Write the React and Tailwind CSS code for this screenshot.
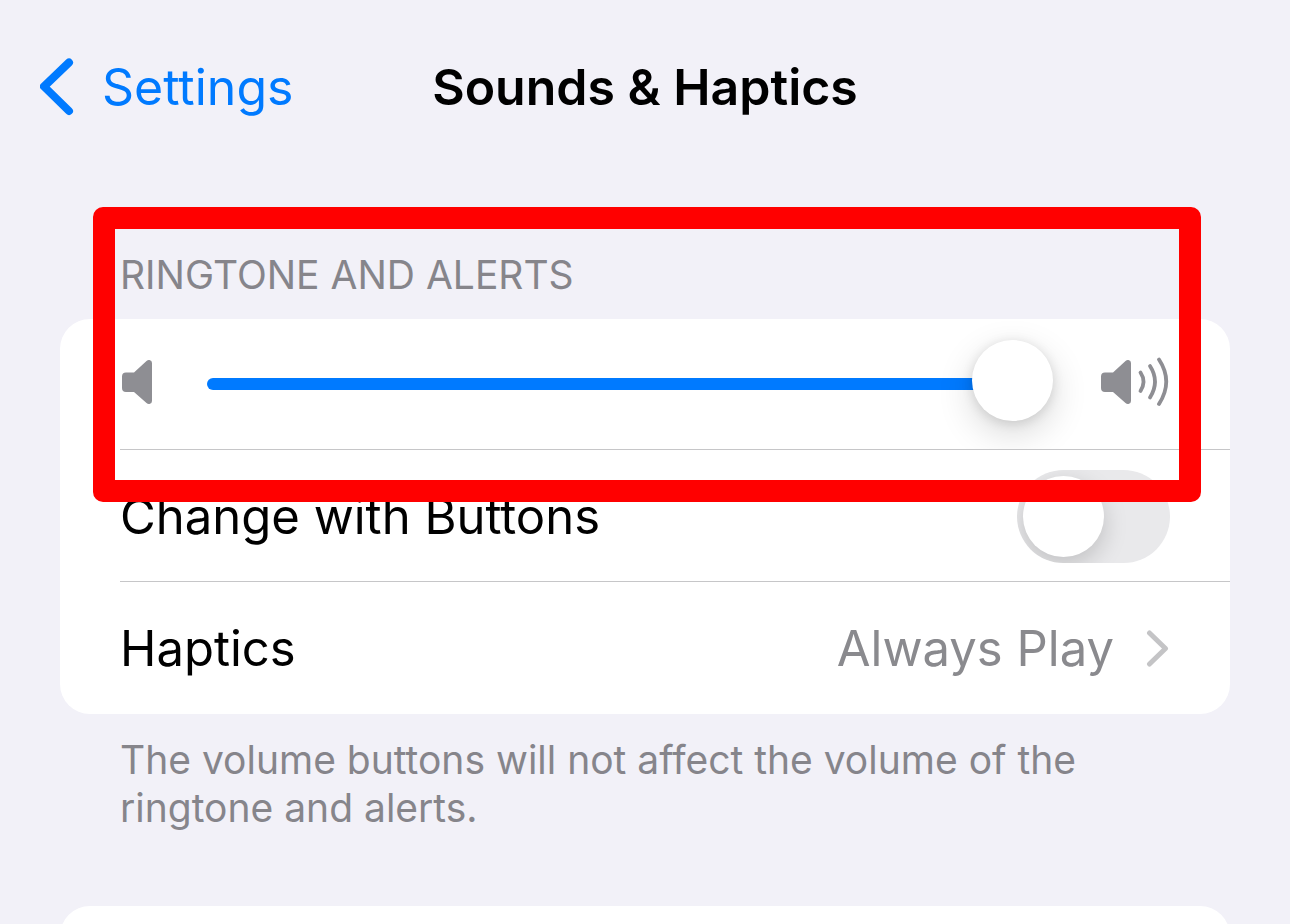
import {useState} from 'react';

const Speaker = ({waves}) => (
  <svg viewBox={waves ? '0 0 70 50' : '-1 0 32 50'} className={waves ? 'w-[70px] h-[50px] shrink-0' : 'w-8 h-[50px] shrink-0'} fill="none" aria-hidden="true">
    <path d="M5 15.500H13L25.500 4Q27 2.700 28.500 3.100Q31 3.600 31 6V44Q31 46.400 28.500 46.900Q27 47.300 25.500 46L13 35H5Q1 35 1 31V19.500Q1 15.500 5 15.500Z" fill="#8e8e93" />
    {waves && (
      <g stroke="#8e8e93" strokeWidth="3.800" strokeLinecap="round">
        <path d="M40.500 15.500Q46.500 24.500 40.500 34" />
        <path d="M50 9Q60 24.500 50 40.500" />
        <path d="M59 2.500Q73.500 24.500 59 47" />
      </g>
    )}
  </svg>
);

const Header = () => (
  <header className="grid grid-cols-[1fr_auto_1fr] items-center h-44 px-10 pb-0.5">
    <a href="#settings" className="flex items-center gap-7 text-[50px] leading-[60px] text-[#007aff]">
      <svg viewBox="0 0 34 58" className="w-[34px] h-[58px]" fill="none" stroke="currentColor" strokeWidth="8" strokeLinecap="round" strokeLinejoin="round" aria-hidden="true">
        <path d="M29 4.500L4 28.500L29 53" />
      </svg>
      Settings
    </a>
    <h1 className="text-[50px] leading-[60px] font-semibold">Sounds &amp; Haptics</h1>
  </header>
);

const App = () => {
  const [volume, setVolume] = useState(100);
  const [withButtons, setWithButtons] = useState(false);

  // Keep the end of the fill under the 81px thumb
  const fill = `calc(40px + (100% - 81px) * ${volume / 100})`;

  return (
    <div className="h-screen overflow-hidden bg-[#f2f1f8] text-black font-['Inter','Liberation_Sans',sans-serif]">
      <Header />

      <main className="px-[60px] pt-[31px]">
        <section className="relative">
          <h2 className="h-28 px-[60px] pt-11 text-[39px] leading-[48px] text-[#86858b]">RINGTONE AND ALERTS</h2>

          <div className="bg-white rounded-[30px] pl-[60px]">
            {/* Volume slider */}
            <div className="flex items-center h-[131px] pr-[60px] pb-1 border-b border-[#c6c6c8] overflow-hidden">
              <Speaker />
              <input
                type="range"
                aria-label="Ringtone and alerts volume"
                min="0"
                max="100"
                value={volume}
                onChange={(e) => setVolume(Number(e.target.value))}
                style={{'--fill': fill}}
                className="flex-1 min-w-0 mt-1 ml-[55px] mr-[47px] h-3 appearance-none bg-transparent [&::-webkit-slider-runnable-track]:h-3 [&::-webkit-slider-runnable-track]:rounded-full [&::-webkit-slider-runnable-track]:bg-[linear-gradient(#007aff,#007aff)] [&::-webkit-slider-runnable-track]:bg-[length:var(--fill)_100%] [&::-webkit-slider-runnable-track]:bg-no-repeat [&::-webkit-slider-thumb]:appearance-none [&::-webkit-slider-thumb]:size-[81px] [&::-webkit-slider-thumb]:-mt-[38px] [&::-webkit-slider-thumb]:rounded-full [&::-webkit-slider-thumb]:bg-white [&::-webkit-slider-thumb]:shadow-[0_12px_36px_rgba(0,0,0,0.16),0_2px_12px_rgba(0,0,0,0.12)]"
              />
              <Speaker waves />
            </div>

            {/* Change with Buttons */}
            <label className="flex items-center justify-between h-[132px] pr-[60px] pt-0.5 border-b border-[#c6c6c8] text-[49px] leading-[60px]">
              Change with Buttons
              <input
                type="checkbox"
                role="switch"
                checked={withButtons}
                onChange={(e) => setWithButtons(e.target.checked)}
                className="appearance-none flex w-[153px] h-[93px] p-1.5 rounded-full overflow-hidden bg-[#e9e9eb] checked:bg-[#34c759] checked:justify-end before:size-[81px] before:rounded-full before:bg-white before:shadow-[0_8px_24px_rgba(0,0,0,0.18)]"
              />
            </label>

            {/* Haptics */}
            <button className="flex items-center w-full h-[132px] pr-[60px] pt-0.5 text-[49px] leading-[60px]">
              <span>Haptics</span>
              <span className="ml-auto mr-8 text-[#8a8a8e]">Always Play</span>
              <svg viewBox="0 0 24 38" className="w-6 h-[38px]" fill="none" stroke="#c4c4c6" strokeWidth="5" strokeLinecap="round" strokeLinejoin="round" aria-hidden="true">
                <path d="M3.500 3L19.500 18.500L3.500 34" />
              </svg>
            </button>
          </div>

          {/* Highlight frame */}
          <div className="absolute top-0 left-[33px] right-[29px] h-[295px] rounded-[10px] border-[22px] border-[#ff0000] pointer-events-none" />
        </section>

        <p className="px-[60px] pt-[22px] text-[39px] leading-[48px] text-[#86858b]">The volume buttons will not affect the volume of the ringtone and alerts.</p>

        <section className="mt-[74px] h-[132px] rounded-[30px] bg-white" />
      </main>
    </div>
  );
};

export default App;
